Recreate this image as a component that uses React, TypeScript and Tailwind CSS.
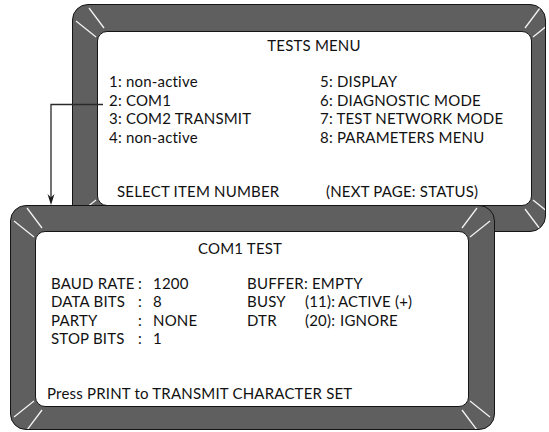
type Corner = "tl" | "tr" | "bl" | "br";

const cornerPos: Record<Corner, string> = {
  tl: "-left-[30px] -top-[30px]",
  tr: "-right-[30px] -top-[30px]",
  bl: "-left-[30px] -bottom-[30px]",
  br: "-right-[30px] -bottom-[30px]",
};

// two light streaks on the bezel at each screen corner
function Glint({ corner }: { corner: Corner }) {
  const sx = corner === "tl" || corner === "bl" ? 1 : -1;
  const sy = corner === "tl" || corner === "tr" ? 1 : -1;
  const p = (x: number, y: number) => [30 + sx * x, 30 + sy * y];
  const lines = [
    [p(-9, -24), p(6, -4)],
    [p(-22, -11), p(-2, 5)],
  ];
  return (
    <svg
      className={`pointer-events-none absolute h-[60px] w-[60px] ${cornerPos[corner]}`}
      viewBox="0 0 60 60"
    >
      {lines.map(([a, b], i) => (
        <line
          key={i}
          x1={a[0]}
          y1={a[1]}
          x2={b[0]}
          y2={b[1]}
          stroke="#f4f4f4"
          strokeWidth={1.3}
        />
      ))}
    </svg>
  );
}

function Glints() {
  return (
    <>
      <Glint corner="tl" />
      <Glint corner="tr" />
      <Glint corner="bl" />
      <Glint corner="br" />
    </>
  );
}

const menuLeft = ["1: non-active", "2: COM1", "3: COM2 TRANSMIT", "4: non-active"];
const menuRight = [
  "5: DISPLAY",
  "6: DIAGNOSTIC MODE",
  "7: TEST NETWORK MODE",
  "8: PARAMETERS MENU",
];

const settings = [
  { label: "BAUD RATE", value: "1200" },
  { label: "DATA BITS", value: "8" },
  { label: "PARTY", value: "NONE" },
  { label: "STOP BITS", value: "1" },
];

function TestsMenu() {
  return (
    <div className="relative ml-[72px] mt-[4px] flex h-[228px] w-[474px] overflow-hidden rounded-[16px] border-[1.5px] border-[#151515] bg-[#5f5f5f] pb-[25.5px] pl-[23.5px] pr-[13.5px] pt-[25.5px]">
      <div className="relative flex flex-1 flex-col rounded-[10px] border-[1.5px] border-[#151515] bg-white">
        <Glints />
        <p className="pt-[4px] text-center">TESTS MENU</p>
        <div className="mt-[18px] flex pl-[11.5px] leading-[18.7px]">
          <ul className="w-[211px]">
            {menuLeft.map((m) => (
              <li key={m}>{m}</li>
            ))}
          </ul>
          <ul>
            {menuRight.map((m) => (
              <li key={m}>{m}</li>
            ))}
          </ul>
        </div>
        <div className="mt-auto flex pb-[4px] pl-[19.5px]">
          <span className="w-[209px]">SELECT ITEM NUMBER</span>
          <span>(NEXT PAGE: STATUS)</span>
        </div>
      </div>
    </div>
  );
}

function ComTest() {
  return (
    <div className="relative z-10 -mt-[27px] ml-[10px] flex h-[225px] w-[485px] overflow-hidden rounded-[16px] border-[1.5px] border-[#151515] bg-[#5f5f5f] pb-[22.5px] pl-[23.5px] pr-[25.5px] pt-[24.5px]">
      <div className="relative flex flex-1 flex-col rounded-[10px] border-[1.5px] border-[#151515] bg-white">
        <Glints />
        <p className="ml-[162.5px] pt-[7px]">COM1 TEST</p>
        <div className="mt-[17px] flex pl-[15.5px] leading-[18.3px]">
          <div className="w-[196px]">
            {settings.map((s) => (
              <div key={s.label} className="flex">
                <span className="w-[87px]">{s.label}</span>
                <span className="w-[15px]">:</span>
                <span>{s.value}</span>
              </div>
            ))}
          </div>
          <div>
            <p>BUFFER: EMPTY</p>
            <div className="flex">
              <span className="w-[58px]">BUSY</span>
              <span className="w-[33px]">(11):</span>
              <span>ACTIVE (+)</span>
            </div>
            <div className="flex">
              <span className="w-[58px]">DTR</span>
              <span className="w-[35px]">(20):</span>
              <span>IGNORE</span>
            </div>
          </div>
        </div>
        <p className="mt-auto pb-[3px] pl-[11.5px]">
          Press PRINT to TRANSMIT CHARACTER SET
        </p>
      </div>
    </div>
  );
}

export default function App() {
  return (
    <div className="relative h-[432px] w-[549px] overflow-hidden bg-white font-['Lato',sans-serif] text-[15px] leading-[18.5px] tracking-[0.2px] text-[#111]">
      <TestsMenu />
      <ComTest />
      {/* connector: item 2 -> COM1 TEST screen */}
      <svg
        className="pointer-events-none absolute left-0 top-0 z-20 h-[432px] w-[549px]"
        viewBox="0 0 549 432"
      >
        <polyline
          points="103,104.5 51,104.5 51,198"
          fill="none"
          stroke="#2a2a2a"
          strokeWidth={1.3}
        />
        <polygon points="47.5,194 51,197.5 54.5,194 51,205" fill="#1a1a1a" />
      </svg>
    </div>
  );
}
